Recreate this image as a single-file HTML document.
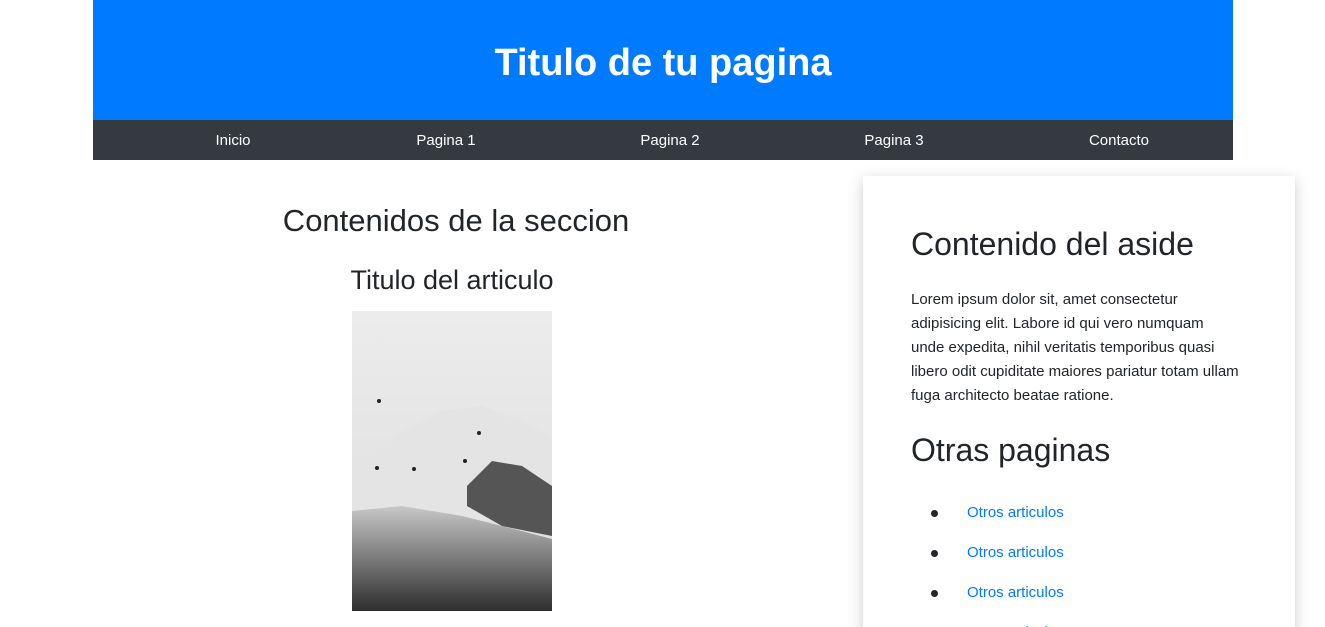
<!DOCTYPE html>
<html><head><meta charset="utf-8"><style>
*{margin:0;padding:0;box-sizing:border-box}
html,body{width:1325px;height:627px;overflow:hidden}
body{background:#fff;font-family:"Liberation Sans",sans-serif;color:#212529;position:relative}
.hd{position:absolute;left:93px;top:0;width:1140px;height:120px;background:#007bff;color:#fff;text-align:center;font-size:38px;font-weight:bold;line-height:126px}
.nav{position:absolute;left:93px;top:120px;width:1140px;height:40px;background:#343a40;color:#fff;font-size:15px}
.nav span{position:absolute;top:12px;transform:translateX(-50%)}
.c{position:absolute;text-align:center;transform:translateX(-50%);white-space:nowrap;font-weight:500}
.aside{position:absolute;left:863px;top:176px;width:432px;height:460px;background:#fff;box-shadow:0 4px 14px rgba(0,0,0,.2);padding:0 48px}
.aside h2{font-size:32px;font-weight:500;position:absolute;left:48px}
.aside p{position:absolute;left:48px;top:112px;width:328px;font-size:15px;line-height:24px}
.aside li{position:absolute;left:104px;font-size:15px;color:#007bff;list-style:none}
.aside li:before{content:"";position:absolute;left:-36px;top:6px;width:7px;height:7px;border-radius:50%;background:#212529}
</style></head><body>
<div class="hd">Titulo de tu pagina</div>
<div class="nav"><span style="left:140px">Inicio</span><span style="left:353px">Pagina 1</span><span style="left:577px">Pagina 2</span><span style="left:801px">Pagina 3</span><span style="left:1026px">Contacto</span></div>
<div class="c" style="left:456px;top:203px;font-size:31px">Contenidos de la seccion</div>
<div class="c" style="left:452px;top:265px;font-size:27px">Titulo del articulo</div>
<svg style="position:absolute;left:352px;top:311px" width="200" height="300" viewBox="0 0 200 300">
<defs><linearGradient id="s" x1="0" y1="0" x2="0" y2="1"><stop offset="0" stop-color="#ececec"/><stop offset="1" stop-color="#dcdcdc"/></linearGradient>
<linearGradient id="g" x1="0" y1="0" x2="0" y2="1"><stop offset="0" stop-color="#c8c8c8"/><stop offset=".4" stop-color="#8a8a8a"/><stop offset="1" stop-color="#2e2e2e"/></linearGradient></defs>
<rect width="200" height="300" fill="url(#s)"/>
<path d="M0 165 L40 125 L90 100 L130 95 L170 110 L200 125 L200 210 L0 210Z" fill="#e4e4e4"/>
<path d="M115 175 L140 150 L170 155 L200 175 L200 225 L150 215 L115 195Z" fill="#555"/>
<path d="M0 200 L50 195 L110 205 L150 215 L200 228 L200 300 L0 300Z" fill="url(#g)"/>
<g fill="#222"><circle cx="27" cy="90" r="2"/><circle cx="127" cy="122" r="2"/><circle cx="113" cy="150" r="2"/><circle cx="62" cy="158" r="2"/><circle cx="25" cy="157" r="2"/></g>
</svg>
<div class="aside">
<h2 style="top:50px">Contenido del aside</h2>
<p>Lorem ipsum dolor sit, amet consectetur adipisicing elit. Labore id qui vero numquam unde expedita, nihil veritatis temporibus quasi libero odit cupiditate maiores pariatur totam ullam fuga architecto beatae ratione.</p>
<h2 style="top:256px">Otras paginas</h2>
<ul><li style="top:328px">Otros articulos</li><li style="top:368px">Otros articulos</li><li style="top:408px">Otros articulos</li><li style="top:448px">Otros articulos</li></ul>
</div>
</body></html>
